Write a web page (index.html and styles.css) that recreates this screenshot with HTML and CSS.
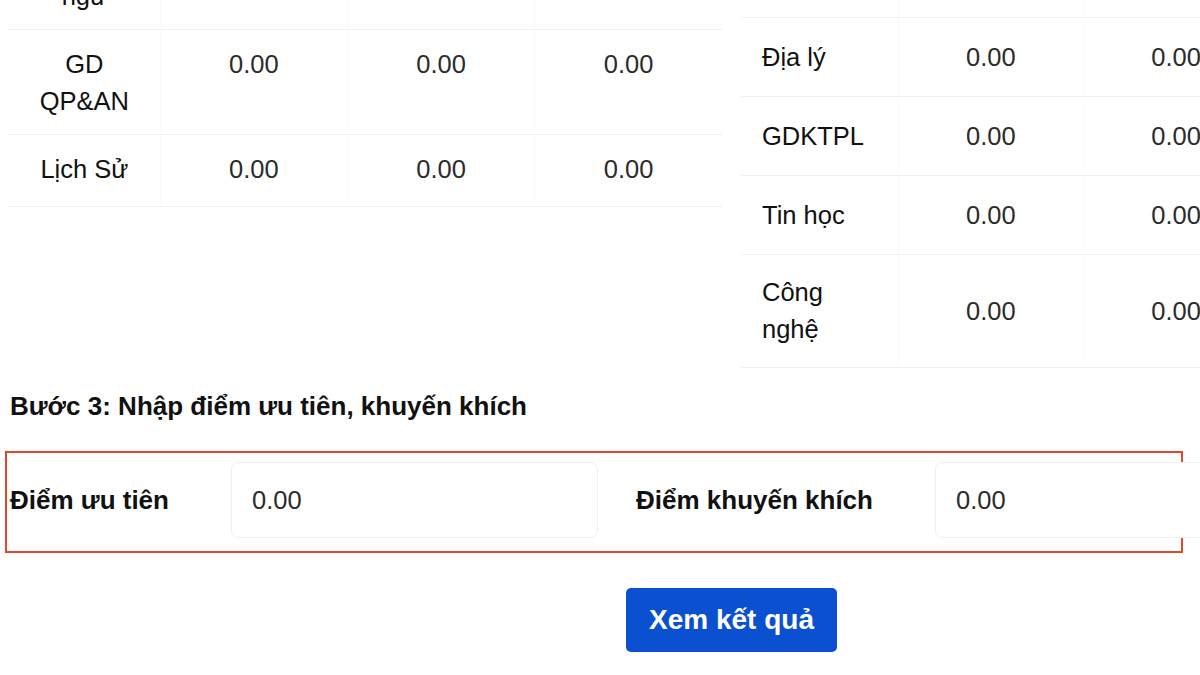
FILE: index.html
```html
<!DOCTYPE html>
<html lang="vi">
<head>
<meta charset="utf-8">
<title>Tính điểm tốt nghiệp</title>
<link rel="stylesheet" href="styles.css">
</head>
<body>
<div class="page">
  <div class="tables">
    <table class="score-table left">
      <colgroup><col class="c-name-l"><col class="c-val"><col class="c-val"><col class="c-val"></colgroup>
      <tbody>
        <tr><td class="name">Toán</td><td>0.00</td><td>0.00</td><td>0.00</td></tr>
        <tr><td class="name">Ngữ văn</td><td>0.00</td><td>0.00</td><td>0.00</td></tr>
        <tr><td class="name">Ngoại<br>ngữ</td><td>0.00</td><td>0.00</td><td>0.00</td></tr>
        <tr><td class="name">GD<br>QP&amp;AN</td><td>0.00</td><td>0.00</td><td>0.00</td></tr>
        <tr><td class="name">Lịch Sử</td><td>0.00</td><td>0.00</td><td>0.00</td></tr>
      </tbody>
    </table>
    <table class="score-table right">
      <colgroup><col class="c-name-r"><col class="c-val2"><col class="c-val2"><col class="c-val2"></colgroup>
      <tbody>
        <tr><td class="name">Vật lý</td><td>0.00</td><td>0.00</td><td>0.00</td></tr>
        <tr><td class="name">Hóa học</td><td>0.00</td><td>0.00</td><td>0.00</td></tr>
        <tr><td class="name">Sinh học</td><td>0.00</td><td>0.00</td><td>0.00</td></tr>
        <tr><td class="name">Địa lý</td><td>0.00</td><td>0.00</td><td>0.00</td></tr>
        <tr><td class="name">GDKTPL</td><td>0.00</td><td>0.00</td><td>0.00</td></tr>
        <tr><td class="name">Tin học</td><td>0.00</td><td>0.00</td><td>0.00</td></tr>
        <tr><td class="name">Công<br>nghệ</td><td>0.00</td><td>0.00</td><td>0.00</td></tr>
      </tbody>
    </table>
  </div>

  <h3 class="step-title">Bước 3: Nhập điểm ưu tiên, khuyến khích</h3>

  <div class="bonus-box">
    <div class="bonus-field">
      <label class="bonus-label" for="uutien">Điểm ưu tiên</label>
      <input class="bonus-input" id="uutien" type="text" value="0.00">
    </div>
    <div class="bonus-field second">
      <label class="bonus-label" for="khuyenkhich">Điểm khuyến khích</label>
      <input class="bonus-input" id="khuyenkhich" type="text" value="0.00">
    </div>
  </div>

  <div class="actions">
    <button class="btn-result" type="button">Xem kết quả</button>
  </div>
</div>
</body>
</html>
```

FILE: styles.css
```css
html, body {
  margin: 0;
  padding: 0;
  background: #ffffff;
  overflow: hidden;
}

body {
  width: 1200px;
  height: 675px;
  font-family: "Liberation Sans", Arial, sans-serif;
  color: #111111;
}

.page {
  width: 1445px;
  margin-left: 9px;
  margin-top: -220px;
}

.tables {
  display: flex;
  align-items: flex-start;
  gap: 19px;
}

.score-table {
  border-collapse: collapse;
  table-layout: fixed;
  width: 713px;
  font-size: 25.5px;
  line-height: 37px;
}

.score-table td {
  border-top: 1px solid #f0f0f0;
  border-bottom: 1px solid #f0f0f0;
  border-left: 1px solid #fafafa;
  border-right: 1px solid #fafafa;
  text-align: center;
  color: #2b2b2b;
  white-space: nowrap;
}

.score-table td:first-child { border-left: none; }
.score-table td:last-child { border-right: none; }

.score-table td.name { color: #111111; }

.left .c-name-l { width: 151px; }
.left .c-val { width: 187px; }
.left td {
  height: 72px;
  padding: 16px 10px 14px;
  box-sizing: border-box;
  vertical-align: top;
}

.right .c-name-r { width: 157px; }
.right .c-val2 { width: 185px; }
.right td {
  height: 79px;
  padding: 19px 10px;
  box-sizing: border-box;
  vertical-align: middle;
}
.right td.name { text-align: left; padding-left: 21px; }

.step-title {
  margin: 24px 0 0 1px;
  font-size: 26px;
  line-height: 28px;
  font-weight: bold;
  color: #111111;
}

.bonus-box {
  display: flex;
  align-items: center;
  width: 1171px;
  margin-top: 31px;
  margin-left: -4px;
  padding: 9px 0 13px 3px;
  border: 2px solid #e2472c;
}

.bonus-field {
  display: flex;
  align-items: center;
  flex: none;
}

.bonus-field.second {
  margin-left: 38px;
}

.bonus-label {
  font-size: 26px;
  font-weight: bold;
  color: #111111;
  white-space: nowrap;
}

.bonus-field:first-child .bonus-label {
  width: 221px;
}

.bonus-field.second .bonus-label {
  width: 299px;
}

.bonus-input {
  width: 367px;
  height: 76px;
  box-sizing: border-box;
  border: 1px solid #efefef;
  border-radius: 8px;
  padding: 0 20px;
  font-family: "Liberation Sans", Arial, sans-serif;
  font-size: 25.5px;
  color: #2b2b2b;
  background: #ffffff;
  outline: none;
}

.actions {
  display: flex;
  justify-content: center;
  margin-top: 35px;
}

.btn-result {
  width: 211px;
  height: 64px;
  border: none;
  border-radius: 5px;
  background: #0b50d0;
  color: #ffffff;
  font-family: "Liberation Sans", Arial, sans-serif;
  font-size: 28px;
  font-weight: bold;
  cursor: pointer;
}
```
